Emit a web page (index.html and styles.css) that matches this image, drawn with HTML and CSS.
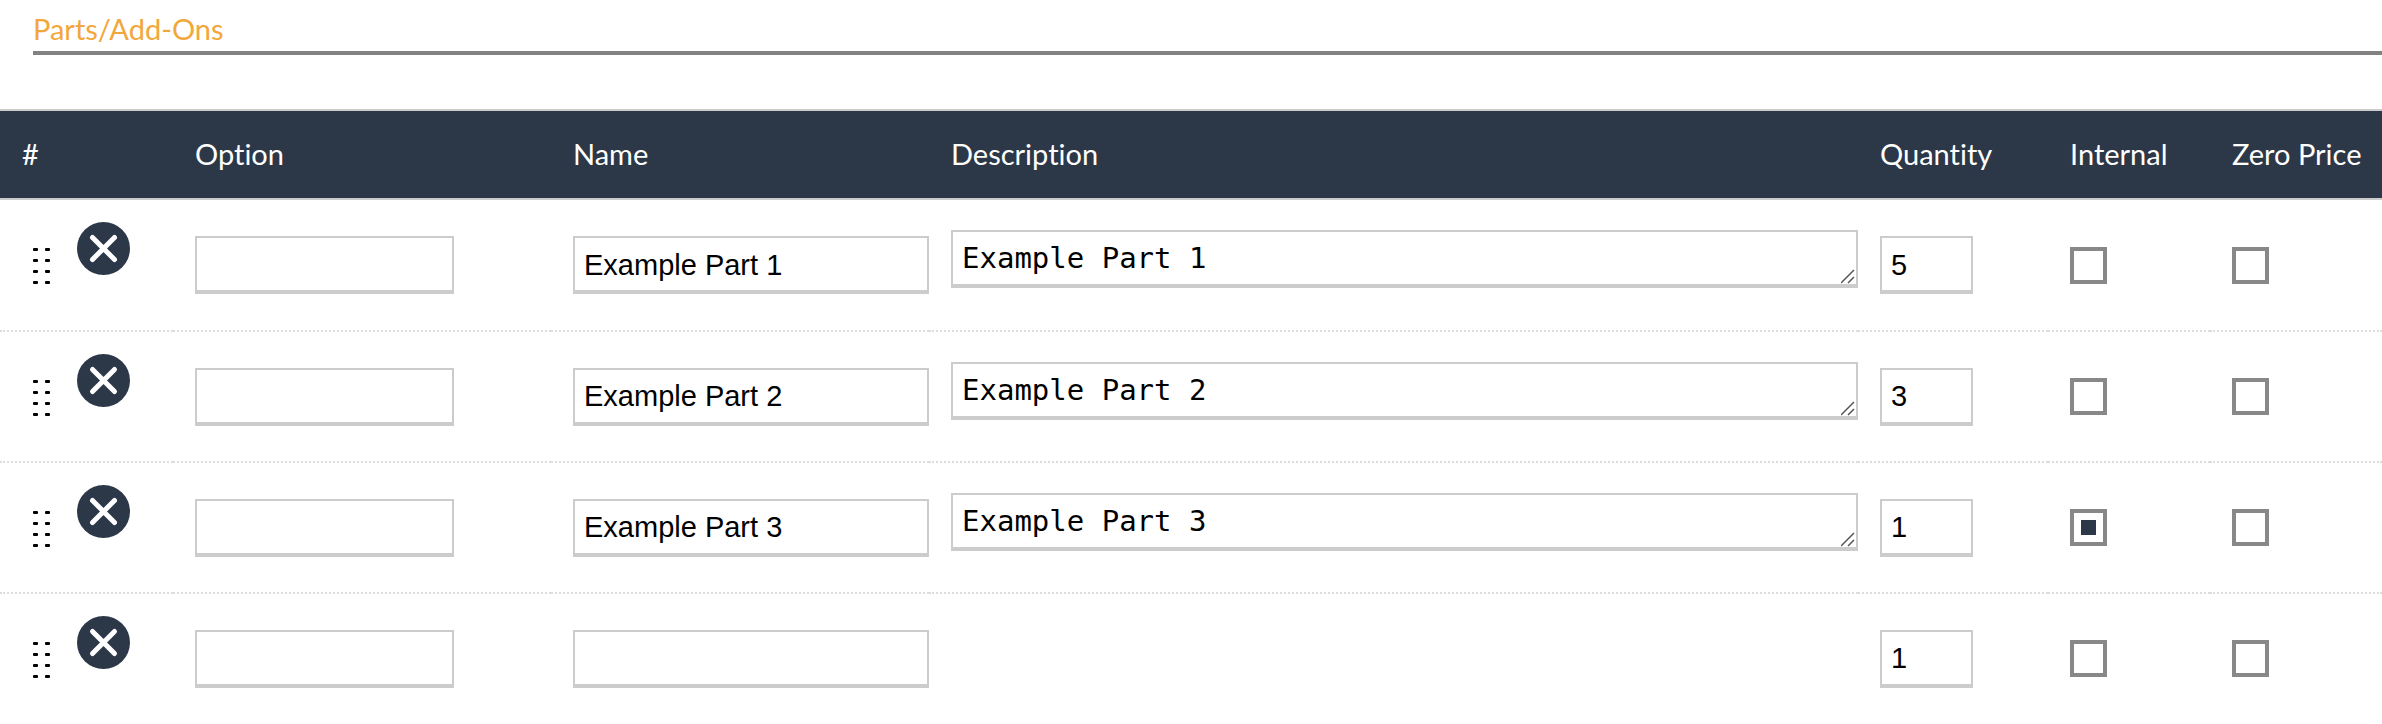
FILE: index.html
```html
<!DOCTYPE html>
<html lang="en">
<head>
    <meta charset="UTF-8">
    <meta name="viewport" content="width=device-width, initial-scale=1.0">
    <title>Parts/Add-Ons</title>
    <link rel="stylesheet" href="styles.css">
</head>
<body>
    <svg class="sprites" aria-hidden="true">
        <symbol id="grip" viewBox="0 0 19 39">
            <rect x="0" y="2" width="5" height="3" rx="1"/>
            <rect x="12" y="2" width="5" height="3" rx="1"/>
            <rect x="0" y="13" width="5" height="3" rx="1"/>
            <rect x="12" y="13" width="5" height="3" rx="1"/>
            <rect x="0" y="24" width="5" height="3" rx="1"/>
            <rect x="12" y="24" width="5" height="3" rx="1"/>
            <rect x="0" y="35" width="5" height="3" rx="1"/>
            <rect x="12" y="35" width="5" height="3" rx="1"/>
        </symbol>
        <symbol id="cross" viewBox="0 0 53 53">
            <circle cx="26.5" cy="26.5" r="26.5" fill="#2c3848"/>
            <path d="M15.5 15.5 L37.5 37.5 M37.5 15.5 L15.5 37.5" stroke="#fff" stroke-width="5" stroke-linecap="round"/>
        </symbol>
    </svg>

    <h2 class="section-title">Parts/Add-Ons</h2>

    <table class="parts">
        <thead>
            <tr>
                <th class="col-num">#</th>
                <th class="col-option">Option</th>
                <th class="col-name">Name</th>
                <th class="col-description">Description</th>
                <th class="col-quantity">Quantity</th>
                <th class="col-internal">Internal</th>
                <th class="col-zero">Zero Price</th>
            </tr>
        </thead>
        <tbody>
            <tr>
                <td class="actions">
                    <div class="action-group">
                        <svg class="grip"><use href="#grip"/></svg>
                        <button class="remove" type="button" aria-label="Remove part 1"><svg><use href="#cross"/></svg></button>
                    </div>
                </td>
                <td><input class="field option" type="text" aria-label="Option 1"></td>
                <td><input class="field" type="text" aria-label="Name 1" value="Example Part 1"></td>
                <td><textarea class="field description" rows="1" aria-label="Description 1">Example Part 1</textarea></td>
                <td><input class="field quantity" type="text" aria-label="Quantity 1" value="5"></td>
                <td><input class="check" type="checkbox" aria-label="Internal 1"></td>
                <td><input class="check" type="checkbox" aria-label="Zero Price 1"></td>
            </tr>
            <tr>
                <td class="actions">
                    <div class="action-group">
                        <svg class="grip"><use href="#grip"/></svg>
                        <button class="remove" type="button" aria-label="Remove part 2"><svg><use href="#cross"/></svg></button>
                    </div>
                </td>
                <td><input class="field option" type="text" aria-label="Option 2"></td>
                <td><input class="field" type="text" aria-label="Name 2" value="Example Part 2"></td>
                <td><textarea class="field description" rows="1" aria-label="Description 2">Example Part 2</textarea></td>
                <td><input class="field quantity" type="text" aria-label="Quantity 2" value="3"></td>
                <td><input class="check" type="checkbox" aria-label="Internal 2"></td>
                <td><input class="check" type="checkbox" aria-label="Zero Price 2"></td>
            </tr>
            <tr>
                <td class="actions">
                    <div class="action-group">
                        <svg class="grip"><use href="#grip"/></svg>
                        <button class="remove" type="button" aria-label="Remove part 3"><svg><use href="#cross"/></svg></button>
                    </div>
                </td>
                <td><input class="field option" type="text" aria-label="Option 3"></td>
                <td><input class="field" type="text" aria-label="Name 3" value="Example Part 3"></td>
                <td><textarea class="field description" rows="1" aria-label="Description 3">Example Part 3</textarea></td>
                <td><input class="field quantity" type="text" aria-label="Quantity 3" value="1"></td>
                <td><input class="check" type="checkbox" aria-label="Internal 3" checked></td>
                <td><input class="check" type="checkbox" aria-label="Zero Price 3"></td>
            </tr>
            <tr>
                <td class="actions">
                    <div class="action-group">
                        <svg class="grip"><use href="#grip"/></svg>
                        <button class="remove" type="button" aria-label="Remove part 4"><svg><use href="#cross"/></svg></button>
                    </div>
                </td>
                <td><input class="field option" type="text" aria-label="Option 4"></td>
                <td><input class="field" type="text" aria-label="Name 4"></td>
                <td></td>
                <td><input class="field quantity" type="text" aria-label="Quantity 4" value="1"></td>
                <td><input class="check" type="checkbox" aria-label="Internal 4"></td>
                <td><input class="check" type="checkbox" aria-label="Zero Price 4"></td>
            </tr>
        </tbody>
    </table>
</body>
</html>
```
FILE: styles.css
```css
* {
    box-sizing: border-box;
}

body {
    margin: 0;
    background-color: #fff;
    font-family: Lato, sans-serif;
    font-size: 29px;
    font-variant-ligatures: none;
}

.sprites {
    display: none;
}

.section-title {
    margin: 0 0 54px 33px;
    padding: 12px 0 5px;
    border-bottom: 4px solid #828282;
    color: #f2a73b;
    font-size: 29px;
    font-weight: 400;
    line-height: 34px;
}

.parts {
    width: 100%;
    table-layout: fixed;
    border-collapse: separate;
    border-spacing: 0;
}

.parts th {
    height: 91px;
    padding: 0 0 3px 22px;
    border-top: 2px solid #ccc;
    border-bottom: 2px solid #ccc;
    background-color: #2c3848;
    color: #fff;
    font-weight: 400;
    text-align: left;
    white-space: nowrap;
}

.parts td {
    height: 131px;
    padding: 0 0 0 22px;
    border-bottom: 2px dotted #ddd;
    vertical-align: middle;
}

.parts tbody tr:first-child td {
    height: 132px;
}

.parts tr:last-child td {
    border-bottom-color: transparent;
}

.col-num {
    width: 173px;
}

.col-option,
.col-name {
    width: 378px;
}

.col-quantity {
    width: 190px;
}

.col-internal {
    width: 162px;
}

.col-zero {
    width: 172px;
}

.parts .actions {
    padding: 22px 0 0 33px;
    vertical-align: top;
}

.action-group {
    display: flex;
    align-items: flex-start;
    gap: 25px;
}

.grip {
    width: 19px;
    height: 39px;
    margin-top: 24px;
    cursor: move;
}

.remove {
    width: 53px;
    height: 53px;
    padding: 0;
    border: none;
    border-radius: 50%;
    background: none;
    cursor: pointer;
}

.remove svg {
    display: block;
    width: 53px;
    height: 53px;
}

.field {
    display: block;
    width: 100%;
    height: 58px;
    padding: 2px 9px 0;
    border: 2px solid #ccc;
    border-bottom-width: 4px;
    border-radius: 0;
    background-color: #fff;
    color: #000;
    font-family: "Liberation Sans", Arial, sans-serif;
    font-size: 29px;
}

.option {
    width: 259px;
}

.quantity {
    width: 93px;
}

.description {
    margin-bottom: 12px;
    padding: 9px 9px 8px;
    font-family: "DejaVu Sans Mono", monospace;
    line-height: 34px;
    resize: both;
}

.description::-webkit-resizer {
    background: url("data:image/svg+xml,%3Csvg xmlns='http://www.w3.org/2000/svg' width='15' height='15'%3E%3Cpath d='M0 14L13 1M7 14L13 8' stroke='%23555' stroke-width='1.5'/%3E%3C/svg%3E") no-repeat;
}

.check {
    display: block;
    width: 37px;
    height: 37px;
    margin: 0;
    padding: 7px;
    border: 4px solid #888;
    appearance: none;
    background-color: #fff;
}

.check:checked {
    background-color: #2c3848;
    background-clip: content-box;
}
```
